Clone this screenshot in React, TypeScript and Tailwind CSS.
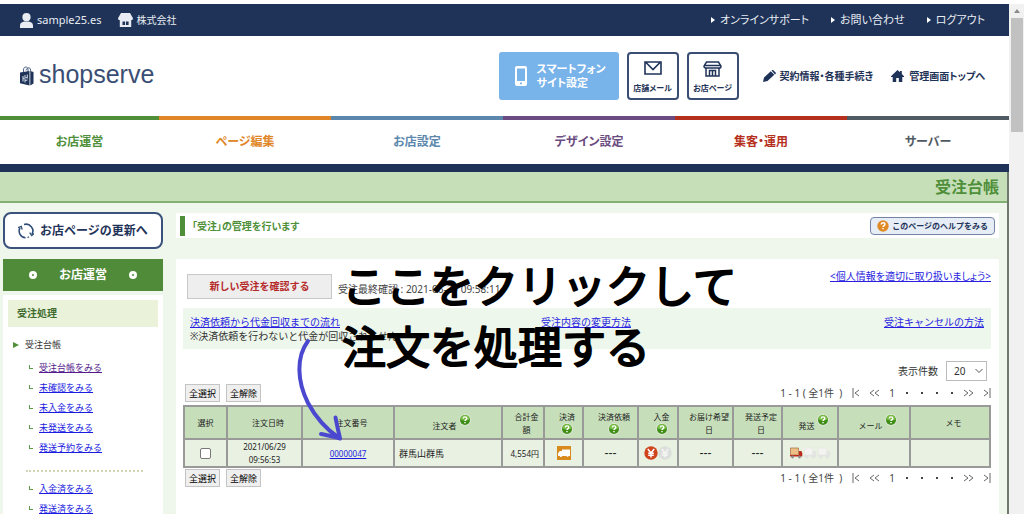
import type { ReactNode } from 'react';

const NAV = [
  { label: 'お店運営', className: 'border-[#4f8f3a] text-[#4f8f3a]' },
  { label: 'ページ編集', className: 'border-[#e08627] text-[#e08627]' },
  { label: 'お店設定', className: 'border-[#5c87ad] text-[#5c87ad]' },
  { label: 'デザイン設定', className: 'border-[#6b4c80] text-[#6b4c80]' },
  { label: '集客・運用', className: 'border-[#b5301c] text-[#b5301c]' },
  { label: 'サーバー', className: 'border-[#4f5a62] text-[#4f5a62]' },
];

const TOP_LINKS = ['オンラインサポート', 'お問い合わせ', 'ログアウト'];

const LEDGER_LINKS = ['受注台帳をみる', '未確認をみる', '未入金をみる', '未発送をみる', '発送予約をみる'];
const DONE_LINKS = ['入金済をみる', '発送済をみる'];

function UserIcon() {
  return (
    <svg width="13" height="15" viewBox="0 0 13 15" fill="#e9edf3">
      <circle cx="6.500" cy="4.200" r="4.100" />
      <path d="M0 15v-2.600C0 10 2 8.800 4.300 8.500h4.400C11 8.800 13 10 13 12.400V15z" />
    </svg>
  );
}

function StoreIcon() {
  return (
    <svg width="15" height="14" viewBox="0 0 15 14" fill="#e9edf3">
      <path d="M3 0h9l3 5.200c0 1.200-.8 2-1.800 2V14H1.800V7.200C.8 7.200 0 6.400 0 5.200z" />
      <path d="M4.500 8.500h2.600V12H4.500zM8 8.500h2.600V12H8z" fill="#1f3358" />
    </svg>
  );
}

function BagLogo() {
  return (
    <svg width="14" height="20" viewBox="0 0 14 20" fill="none">
      <path d="M3.500 7V4c0-2 1-3 2.300-3S8 2 8 4v2M6 4.500C6.500 2.500 7.800 1.500 9 1.800c1.400.3 1.800 1.700 1.500 3.700" stroke="#51658a" />
      <path d="M0 6.500 9.500 5v14.500L0 17.200zM10.300 5 13.500 6v11.500l-3.200 2z" fill="#1f3358" />
      <path d="M3 10v5.500M5 9v2.500M5 13v3.500M7.300 8.500v4M3 12.500l4-1M5 14.500l2.500-.5" stroke="#d5dce8" />
    </svg>
  );
}

function PhoneIcon() {
  return (
    <svg width="12" height="20" viewBox="0 0 12 20">
      <path fillRule="evenodd" d="M2 0h8a2 2 0 0 1 2 2v16a2 2 0 0 1-2 2H2a2 2 0 0 1-2-2V2a2 2 0 0 1 2-2zM2 2.500V15h8V2.500zM5 16.500v1.700h2v-1.700z" fill="#fff" />
    </svg>
  );
}

function MailIcon() {
  return (
    <svg width="18" height="14" viewBox="0 0 18 14" fill="none" stroke="#1f3358" strokeWidth="1.600">
      <path d="M1 1h16v12H1zM2 1.500l7 7 7-7" />
    </svg>
  );
}

function ShopIcon() {
  return (
    <svg width="19" height="16" viewBox="0 0 19 16" fill="none" stroke="#1f3358" strokeWidth="1.500">
      <path d="M3.500 1h12L18 5.200c0 1-.7 1.800-1.700 1.800H2.700C1.700 7 1 6.200 1 5.200z" />
      <path d="M3 7v8h13V7M1 4.500h17M6.500 15V9.500h6V15M9.500 9.500V15" />
    </svg>
  );
}

function PencilIcon() {
  return (
    <svg width="13" height="12" viewBox="0 0 13 12" fill="#1f3358">
      <path d="M0 12l1-4.500L7.800 1.200l3.500 3.600L4.500 11zM8.600.5l.6-.4c.4-.2.8-.1 1.100.2l2.300 2.300c.4.4.4.900.1 1.200l-.7.600z" />
    </svg>
  );
}

function HomeIcon() {
  return (
    <svg width="13" height="12" viewBox="0 0 13 12" fill="#1f3358">
      <path d="M6.500 0 9 2.300V1h1.800v3L13 6.200V7h-1.700v5H7.800V8H5.200v4H1.700V7H0v-.8z" />
    </svg>
  );
}

function RefreshIcon() {
  return (
    <svg width="16" height="16" viewBox="0 0 16 16" fill="none" stroke="#2d4d78" strokeWidth="1.600">
      <path d="M7.500 14.700A6.700 6.700 0 0 1 2 4.800M6 1.600a6.700 6.700 0 0 1 8 9.600" />
      <path d="M0 4.600 3.200 3.300 4.200 6.600M11.700 9.600l2 3L16 10.600M9.500 14.500l1.500-.6" strokeWidth="1.300" />
    </svg>
  );
}

function HelpIcon() {
  return (
    <svg className="inline-block" width="12" height="12" viewBox="0 0 12 12">
      <circle cx="6" cy="6" r="5.900" fill="#dfe6d8" />
      <circle cx="6" cy="6" r="5" fill="#3f8f17" />
      <path d="M1.500 5.500a4.500 4.500 0 0 1 9 0c-3 1.200-6 1.200-9 0z" fill="#79bd45" />
      <path d="M4.300 4.600c0-1.200.8-1.700 1.700-1.700s1.800.5 1.800 1.500c0 1.200-1.800 1.300-1.800 2.600M6 8v1.300" fill="none" stroke="#fff" strokeWidth="1.400" />
    </svg>
  );
}

function OrangeHelpIcon() {
  return (
    <svg width="12" height="12" viewBox="0 0 12 12">
      <circle cx="6" cy="6" r="5.700" fill="#e08a26" />
      <path d="M4.200 4.600c0-1.300.8-1.800 1.800-1.800s1.900.5 1.900 1.600C7.900 5.600 6 5.700 6 7M6 8v1.300" fill="none" stroke="#fff" strokeWidth="1.400" />
    </svg>
  );
}

function PaymentIcon() {
  return (
    <svg className="inline-block" width="14" height="14" viewBox="0 0 14 14">
      <path d="M0 0h14v14H0z" fill="#d98a1d" />
      <path d="M5 3.500h8v6.500h-1.200a1.300 1.300 0 0 1-2.400 0H5.200a1.300 1.300 0 0 1-2.500 0H1V7.500l1.700-2.500H5z" fill="#fff" />
    </svg>
  );
}

function YenIcon({ paid = false }: { paid?: boolean }) {
  return (
    <svg width="14" height="14" viewBox="0 0 14 14">
      <circle cx="7" cy="7" r="6.700" fill={paid ? '#cf451d' : '#dcdedc'} />
      <path d="M3.800 3 7 7l3.200-4M7 7v4.500M4.200 7.300h5.600M4.200 9.300h5.600" fill="none" stroke={paid ? '#fff' : '#f3f4f3'} strokeWidth="1.500" />
    </svg>
  );
}

function TruckIcon({ active = false }: { active?: boolean }) {
  return (
    <svg width="14" height="12" viewBox="0 0 14 12">
      <path d="M1.500 1H9.500v7h-8z" fill={active ? '#eebf85' : '#f3f4f2'} stroke={active ? '#a8794c' : '#e6e8e5'} strokeWidth=".8" />
      <path d="M10 4h2.300L13.300 6v3.500H1V8h9z" fill={active ? '#bd2818' : '#e3e5e2'} />
      <circle cx="3.500" cy="10" r="1.400" fill={active ? '#8b8b8b' : '#e0e2df'} />
      <circle cx="10.500" cy="10" r="1.400" fill={active ? '#8b8b8b' : '#e0e2df'} />
    </svg>
  );
}

function SideLinks({ items }: { items: string[] }) {
  return (
    <ul className="flex flex-col gap-[10px] pl-[26px] text-[9px] leading-[10px]">
      {items.map((item) => (
        <li key={item} className="flex gap-[6px]">
          <span className="mt-[2px] h-[4px] w-[4px] border-b border-l border-[#5f9a4d]" />
          <a href="#" className={item === '受注台帳をみる' ? 'text-[#551a8b] underline' : 'text-[#1a1ae0] underline'}>
            {item}
          </a>
        </li>
      ))}
    </ul>
  );
}

function Sidebar() {
  return (
    <aside className="flex w-[160px] shrink-0 flex-col">
      <button className="mt-[9px] flex h-[37px] items-center justify-center gap-[6px] rounded-lg border-2 border-[#3a527c] bg-white text-xs font-bold text-[#1f3358]">
        <RefreshIcon />
        お店ページの更新へ
      </button>
      <h2 className="mt-[10px] flex h-8 items-center justify-center gap-[22px] bg-[#4f8b38] text-xs font-bold text-white">
        <span className="h-[8px] w-[8px] rounded-full border-[3px] border-white" />
        お店運営
        <span className="h-[8px] w-[8px] rounded-full border-[3px] border-white" />
      </h2>
      <div className="mt-1 flex-1 bg-white pt-[5px]">
        <h3 className="mx-[5px] flex h-[27px] items-center bg-[#eaf2da] pl-[9px] text-[10px] font-bold text-[#3f6b2e]">受注処理</h3>
        <p className="mt-2 flex items-center gap-[6px] pl-[10px] text-[9px] leading-5 text-[#333]">
          <span className="h-0 w-0 border-y-[3px] border-l-[6px] border-y-transparent border-l-[#4f8f3a]" />
          受注台帳
        </p>
        <div className="mt-[8px]">
          <SideLinks items={LEDGER_LINKS} />
        </div>
        <div className="mt-[17px] mr-[20px] mb-[12px] ml-[23px] border-t-2 border-dotted border-[#cfd6b4]" />
        <SideLinks items={DONE_LINKS} />
      </div>
    </aside>
  );
}

function SelectButtons() {
  return (
    <div className="flex gap-[6px] pl-[2px]">
      {['全選択', '全解除'].map((label) => (
        <button key={label} className="h-[18px] border border-[#c4c4c4] bg-[#efefef] px-[3px] text-[9px] leading-none text-black">
          {label}
        </button>
      ))}
    </div>
  );
}

function Chevrons({ d, width }: { d: string; width: number }) {
  return (
    <svg width={width} height="10" viewBox={`0 0 ${width} 10`} fill="none" stroke="#666">
      <path d={d} />
    </svg>
  );
}

function Pager() {
  return (
    <div className="flex items-center gap-[10px] text-[10px] leading-[18px] text-[#444]">
      <span className="whitespace-pre">1 - 1 ( 全1件  )</span>
      <Chevrons width={7} d="M1 0v10M7 2 3 5l4 3" />
      <Chevrons width={10} d="M5 2 1 5l4 3M10 2 6 5l4 3" />
      <span>1</span>
      <span className="flex gap-[13px] px-px">
        {[1, 2, 3, 4].map((n) => (
          <i key={n} className="h-[2px] w-[2px] bg-[#444]" />
        ))}
      </span>
      <Chevrons width={10} d="M0 2l4 3-4 3M5 2l4 3-4 3" />
      <Chevrons width={7} d="M0 2l4 3-4 3M6 0v10" />
    </div>
  );
}

function Th({ lines, help, width }: { lines: string[]; help?: 'side' | 'below'; width: string }) {
  return (
    <th className={`border-2 border-[#999] p-0 font-normal ${width}`}>
      <div className="flex h-[31px] flex-col items-center justify-center leading-[13px]">
        {help === 'side' ? (
          <span className="flex items-start gap-[2px]">
            <span className="mt-[5px]">{lines[0]}</span>
            <HelpIcon />
          </span>
        ) : (
          lines.map((line) => <span key={line}>{line}</span>)
        )}
        {help === 'below' && <HelpIcon />}
      </div>
    </th>
  );
}

function Td({ children, className = 'text-center' }: { children?: ReactNode; className?: string }) {
  return <td className={`h-[28px] border-2 border-[#999] p-0 ${className}`}>{children}</td>;
}

function Blank() {
  return <span className="font-['Liberation_Sans',Arial,sans-serif] text-xs leading-[13px]">---</span>;
}

function OrderTable() {
  return (
    <table className="mt-[3px] w-full table-fixed border-collapse text-[8px] leading-[13px] text-[#222]">
      <thead className="bg-[#c6dfba]">
        <tr>
          <Th lines={['選択']} width="w-[43px]" />
          <Th lines={['注文日時']} width="w-[75px] pl-[7px]" />
          <Th lines={['注文番号']} width="w-[92px] pl-[7px]" />
          <Th lines={['注文者']} help="side" width="w-[108px] pl-[7px]" />
          <Th lines={['合計金', '額']} width="w-[42px] pl-[7px]" />
          <Th lines={['決済']} help="below" width="w-[39px] pl-[7px]" />
          <Th lines={['決済依頼']} help="below" width="w-[55px] pl-[7px]" />
          <Th lines={['入金']} help="below" width="w-[40px] pl-[7px]" />
          <Th lines={['お届け希望', '日']} width="w-[55px] pl-[7px]" />
          <Th lines={['発送予定', '日']} width="w-[49px] pl-[7px]" />
          <Th lines={['発送']} help="side" width="w-[56px] pl-[7px]" />
          <Th lines={['メール']} help="side" width="w-[72px] pl-[7px]" />
          <Th lines={['メモ']} width="w-[80px] pl-[7px]" />
        </tr>
      </thead>
      <tbody className="bg-[#e8f1e2]">
        <tr>
          <Td>
            <input type="checkbox" aria-label="選択" className="mx-auto block h-[11px] w-[11px] appearance-none rounded-[2px] border border-[#777] bg-white" />
          </Td>
          <Td>
            2021/06/29
            <br />
            09:56:53
          </Td>
          <Td>
            <a href="#" className="text-[#1a1ae0] underline">00000047</a>
          </Td>
          <Td className="pl-1 text-[9px]">群馬山群馬</Td>
          <Td className="pr-1 text-right">4,554円</Td>
          <Td>
            <PaymentIcon />
          </Td>
          <Td>
            <Blank />
          </Td>
          <Td>
            <span className="flex justify-center">
              <YenIcon paid />
              <YenIcon />
            </span>
          </Td>
          <Td>
            <Blank />
          </Td>
          <Td>
            <Blank />
          </Td>
          <Td>
            <span className="flex pl-[6px]">
              <TruckIcon active />
              <TruckIcon />
              <TruckIcon />
            </span>
          </Td>
          <Td />
          <Td />
        </tr>
      </tbody>
    </table>
  );
}

function Orders() {
  return (
    <main className="flex min-w-0 flex-1 flex-col">
      <div className="mt-[10px] flex h-[25px] items-center bg-white pr-1 pl-1">
        <h2 className="border-l-[5px] border-[#4f8f3a] pl-[7px] text-[10px] leading-5 font-bold text-[#4f8f3a] [font-feature-settings:'palt']">
          「受注」の管理を行います
        </h2>
        <a href="#" className="ml-auto flex h-[18px] items-center gap-[3px] rounded border border-[#7484a3] bg-[#e6edf7] px-[6px] text-[8px] font-bold text-[#1f3358]">
          <OrangeHelpIcon />
          このページのヘルプをみる
        </a>
      </div>

      <div className="mt-[21px] flex-1 bg-white pt-[15px] pr-2 pl-[7px]">
        <div className="flex items-start pl-1">
          <button className="h-[25px] w-[145px] border border-[#c8c8c8] bg-[#eee] text-[10px] font-bold text-[#b52a2a]">新しい受注を確認する</button>
          <p className="mt-[8px] ml-[6px] text-[10px] leading-[14px] text-[#444]">受注最終確認 : 2021-06-29 09:58:11</p>
          <a href="#" className="ml-auto text-[10px] leading-[5px] text-[#2a1fe0] underline [font-feature-settings:'palt']">
            &lt;個人情報を適切に取り扱いましょう&gt;
          </a>
        </div>

        <div className="mt-[9px] bg-[#eef7ec] px-[7px] pt-[7px] pb-[6px] text-[10px] leading-[14px] text-[#333]">
          <div className="flex justify-between">
            <a href="#" className="text-[#2a1fe0] underline">決済依頼から代金回収までの流れ</a>
            <a href="#" className="mr-[52px] text-[#2a1fe0] underline">受注内容の変更方法</a>
            <a href="#" className="text-[#2a1fe0] underline">受注キャンセルの方法</a>
          </div>
          <p>※決済依頼を行わないと代金が回収されません</p>
        </div>

        <div className="mt-3 flex items-center justify-end gap-2 pr-1 text-[10px] text-[#333]">
          <label htmlFor="page-size">表示件数</label>
          <span className="relative">
            <select id="page-size" className="block h-5 w-[41px] appearance-none border border-[#bbb] bg-white pl-[7px] text-[10px]">
              <option>20</option>
            </select>
            <svg className="pointer-events-none absolute top-[7px] right-1" width="8" height="6" viewBox="0 0 8 6" fill="none" stroke="#555">
              <path d="m.5 1 3.500 3.500L7.500 1" />
            </svg>
          </span>
        </div>
        <div className="mt-[3px] flex items-center justify-between">
          <SelectButtons />
          <Pager />
        </div>
        <OrderTable />
        <div className="mt-px flex items-center justify-between">
          <SelectButtons />
          <Pager />
        </div>
      </div>
    </main>
  );
}

function Header() {
  return (
    <header className="[font-feature-settings:'palt']">
      <div className="flex h-8 items-center bg-[#1f3358] pr-[24px] pl-[20px] text-[11px] text-[#e9edf3]">
        <UserIcon />
        <span className="ml-1">sample25.es</span>
        <span className="ml-[16px]">
          <StoreIcon />
        </span>
        <span className="ml-1 text-[10px]">株式会社</span>
        <nav className="ml-auto flex gap-[22px]">
          {TOP_LINKS.map((link) => (
            <a key={link} href="#" className="flex items-center gap-[5px]">
              <span className="h-0 w-0 border-y-[3px] border-l-[4px] border-y-transparent border-l-white" />
              {link}
            </a>
          ))}
        </nav>
      </div>

      <div className="flex h-20 items-center pr-[24px] pl-[20px] text-[10px] font-bold text-[#1f3358]">
        <a href="#" className="flex items-center gap-[5px]">
          <BagLogo />
          <span className="pb-1 font-['Liberation_Sans',Arial,sans-serif] text-[25px] leading-8 font-normal text-[#3a4e74]">shopserve</span>
        </a>
        <a href="#" className="ml-auto flex h-12 w-[120px] items-center gap-[10px] rounded-[3px] bg-[#78b3ea] pl-4 text-[11px] leading-[14px] text-white">
          <PhoneIcon />
          <span>
            スマートフォン
            <br />
            サイト設定
          </span>
        </a>
        <a href="#" className="ml-2 flex h-12 w-[52px] flex-col items-center justify-end gap-[8px] rounded border-2 border-[#3a4e74] pb-[5px] text-[8px] leading-[10px]">
          <MailIcon />
          店舗メール
        </a>
        <a href="#" className="ml-2 flex h-12 w-[52px] flex-col items-center justify-end gap-[6px] rounded border-2 border-[#3a4e74] pb-[5px] text-[8px] leading-[10px]">
          <ShopIcon />
          お店ページ
        </a>
        <a href="#" className="ml-6 flex items-center gap-1">
          <PencilIcon />
          契約情報・各種手続き
        </a>
        <a href="#" className="ml-[18px] flex items-center gap-[5px]">
          <HomeIcon />
          管理画面トップへ
        </a>
      </div>

      <nav className="grid grid-cols-[159fr_172fr_172fr_172fr_172fr_162fr] text-xs font-bold">
        {NAV.map((item) => (
          <a key={item.label} href="#" className={`flex h-12 items-center justify-center border-t-4 ${item.className}`}>
            {item.label}
          </a>
        ))}
      </nav>
      <div className="h-2 bg-[#1f3358]" />
    </header>
  );
}

function Callout() {
  return (
    <svg className="pointer-events-none absolute top-[250px] left-[290px]" width="470" height="200" viewBox="0 0 470 200" strokeLinecap="round" strokeLinejoin="round">
      <g fill="#000" stroke="#000" strokeWidth="2" fontSize="44">
        <text x="52" y="53">ここをクリックして</text>
        <text x="52" y="114">注文を処理する</text>
      </g>
      <g fill="none" stroke="#4a48cf" strokeWidth="4">
        <path d="M18 91C6 107 7 131 18 153c8 15 18 26 31 35" />
        <path d="M31 184c7 1 13 3 19 4.500-1.500-7-3-13-4.500-21" />
      </g>
    </svg>
  );
}

export default function App() {
  return (
    <div className="relative flex bg-white pt-1 font-['Noto_Sans','Noto_Sans_CJK_JP',sans-serif]">
      <div className="min-w-0 flex-1">
        <Header />
        <div className="border-r-2 border-[#6f7a6f] bg-[#eff7ed]">
          <h1 className="flex h-[31px] items-center justify-end border-b-2 border-[#82b173] bg-[#c6dfb9] pr-2 text-base font-bold text-[#4f8f3a]">受注台帳</h1>
          <div className="flex gap-[13px] pr-2 pl-[3px]">
            <Sidebar />
            <Orders />
          </div>
        </div>
      </div>
      <div className="flex w-[15px] shrink-0 flex-col items-center bg-[#f1f1f1] pt-[5px]">
        <span className="h-0 w-0 border-x-[3px] border-b-4 border-x-transparent border-b-[#8a8a8a]" />
        <span className="mt-[5px] h-[114px] w-3 bg-[#c1c1c1]" />
      </div>
      <Callout />
    </div>
  );
}
